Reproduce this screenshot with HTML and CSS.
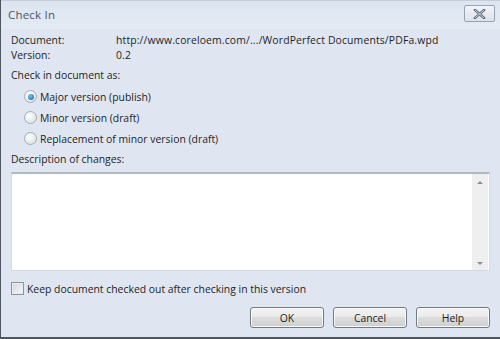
FILE: index.html
```html
<!DOCTYPE html>
<html>
<head>
    <title>Check In</title>
    <link rel="stylesheet" href="styles.css">
</head>
<body>
    <div class="dialog">
        <div class="titlebar">
            <span class="title">Check In</span>
            <button class="close-btn" type="button" aria-label="Close">
                <svg width="13" height="10" viewBox="0 0 13 10">
                    <path d="M2 1 L11 9 M11 1 L2 9" stroke="#5a6270" stroke-width="2.4" stroke-linecap="square"/>
                    <path d="M2 1 L11 9 M11 1 L2 9" stroke="#f4f6f9" stroke-width="0.8"/>
                </svg>
            </button>
        </div>

        <div class="content">
            <div class="info-row">
                <span class="info-label">Document:</span>
                <span class="info-value">http://www.coreloem.com/.../WordPerfect Documents/PDFa.wpd</span>
            </div>
            <div class="info-row">
                <span class="info-label">Version:</span>
                <span class="info-value">0.2</span>
            </div>

            <div class="section-label">Check in document as:</div>
            <div class="radio-list">
                <label class="radio-row"><span class="radio checked"></span>Major version (publish)</label>
                <label class="radio-row"><span class="radio"></span>Minor version (draft)</label>
                <label class="radio-row"><span class="radio"></span>Replacement of minor version (draft)</label>
            </div>

            <div class="section-label desc-label">Description of changes:</div>
            <div class="textbox">
                <div class="text-area"></div>
                <div class="scrollbar">
                    <span class="arrow up"></span>
                    <span class="arrow down"></span>
                </div>
            </div>

            <label class="check-row"><span class="checkbox"></span>Keep document checked out after checking in this version</label>

            <div class="buttons">
                <button class="btn" type="button">OK</button>
                <button class="btn" type="button">Cancel</button>
                <button class="btn" type="button">Help</button>
            </div>
        </div>
    </div>
</body>
</html>
```

FILE: styles.css
```css
html, body {
    margin: 0;
    padding: 0;
}

body {
    width: 500px;
    height: 339px;
    font-family: 'Open Sans', 'Noto Sans', sans-serif;
    font-size: 10.4px;
    color: #1e1e1e;
    background: #e0e7f2;
    overflow: hidden;
}

.dialog {
    box-sizing: border-box;
    width: 500px;
    height: 339px;
    border-left: 1px solid #4f5660;
    border-bottom: 2px solid #4f5660;
    background: #dfe6f2;
    display: flex;
    flex-direction: column;
}

.titlebar {
    height: 28px;
    display: flex;
    align-items: center;
    justify-content: space-between;
    padding: 0 5px 0 7px;
    background: linear-gradient(#dde5f0, #e3eaf4);
    border-top: 1px solid #c3cedd;
}

.title {
    font-size: 11.5px;
    letter-spacing: 0.2px;
    color: #4a5464;
    margin-top: -2px;
}

.close-btn {
    width: 31px;
    height: 17px;
    margin-top: -3px;
    padding: 0;
    border: 1px solid #97a2b2;
    border-radius: 2px;
    background: linear-gradient(#f2f4f8, #dde2ea);
    display: flex;
    align-items: center;
    justify-content: center;
}

.content {
    flex: 1;
    padding: 4px 10px 0 10px;
    display: flex;
    flex-direction: column;
}

.info-row {
    display: flex;
    height: 15px;
    line-height: 15px;
}

.info-label {
    width: 105px;
}

.info-value {
    letter-spacing: 0.15px;
}

.section-label {
    margin-top: 5px;
    height: 15px;
    line-height: 15px;
}

.radio-list {
    display: flex;
    flex-direction: column;
    padding-left: 13px;
    margin-top: 6px;
    gap: 6px;
}

.radio-row {
    display: flex;
    align-items: center;
    height: 15px;
    gap: 3px;
}

.radio {
    width: 11px;
    height: 11px;
    border-radius: 50%;
    border: 1px solid #a7adb6;
    background: radial-gradient(circle at 40% 35%, #ffffff, #d6d9de);
    display: flex;
    align-items: center;
    justify-content: center;
}

.radio.checked::after {
    content: "";
    width: 6px;
    height: 6px;
    border-radius: 50%;
    background: radial-gradient(circle at 40% 35%, #6fc3ee, #1a5e9e);
}

.desc-label {
    margin-top: 6px;
}

.textbox {
    margin-top: 5px;
    height: 96px;
    display: flex;
    border: 1px solid #d4dae3;
    border-top: 2px solid #b3b9c2;
    background: #ffffff;
}

.text-area {
    flex: 1;
}

.scrollbar {
    width: 16px;
    margin-right: 1px;
    background: #efefef;
    display: flex;
    flex-direction: column;
    justify-content: space-between;
    align-items: center;
    padding: 7px 0 5px 0;
}

.arrow {
    width: 0;
    height: 0;
    border-left: 3px solid transparent;
    border-right: 3px solid transparent;
}

.arrow.up {
    border-bottom: 3px solid #8a8f96;
}

.arrow.down {
    border-top: 3px solid #8a8f96;
}

.check-row {
    display: flex;
    align-items: center;
    gap: 3px;
    margin-top: 10px;
    height: 15px;
}

.checkbox {
    width: 11px;
    height: 11px;
    border: 1px solid #8e949c;
    background: linear-gradient(135deg, #d4d7dc, #f6f7f8);
    box-shadow: inset 0 0 0 1px #e9ebee;
}

.buttons {
    display: flex;
    justify-content: flex-end;
    gap: 9px;
    margin-top: 11px;
}

.btn {
    box-sizing: border-box;
    width: 74px;
    height: 21px;
    padding: 0;
    font-family: inherit;
    font-size: 10.4px;
    color: #1e1e1e;
    border: 1px solid #727983;
    border-radius: 3px;
    background: linear-gradient(#f3f3f3 0%, #ebebeb 45%, #dcdcdc 50%, #cfcfcf 100%);
    box-shadow: inset 0 0 0 1px #fafafa;
}
```
